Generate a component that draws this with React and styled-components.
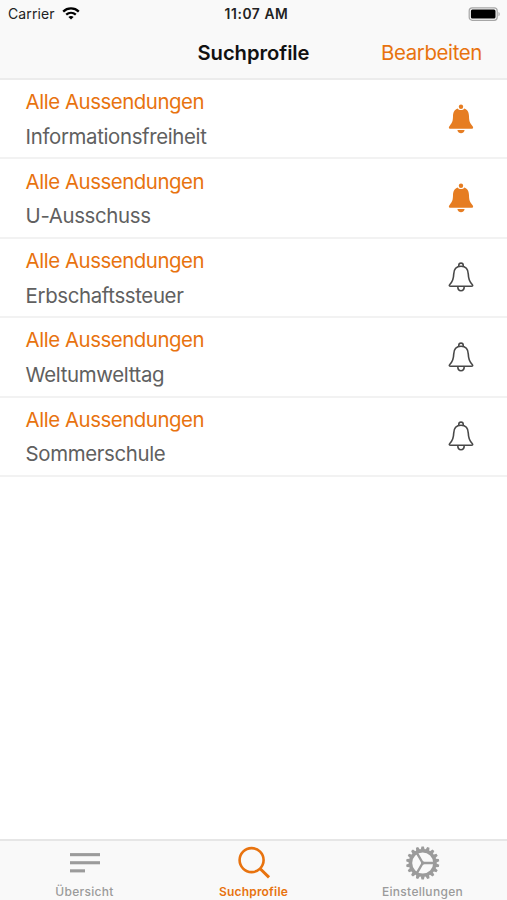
/*
 * SearchProfilesPage
 *
 * Lists the saved search profiles and whether notifications are on
 *
 */

import React from 'react';
import styled, { createGlobalStyle } from 'styled-components';

const ORANGE = '#e8730f';
const BELL_ORANGE = '#e67d22';
const GREY = '#9b9b9b';

const GlobalStyle = createGlobalStyle`
  body {
    margin: 0;
    background: #fff;
    font-family: Inter, 'Liberation Sans', sans-serif;
  }

  * {
    box-sizing: border-box;
  }

  svg {
    display: block;
  }
`;

const Screen = styled.div`
  display: flex;
  flex-direction: column;
  height: 900px;
  overflow: hidden;
`;

const Header = styled.header`
  height: 80px;
  background: #f9f9f9;
  border-bottom: 2px solid #ececec;
`;

const StatusBar = styled.div`
  display: grid;
  grid-template-columns: 1fr auto 1fr;
  align-items: center;
  height: 27px;
  padding: 0 6px 0 8px;
  font-size: 14px;
  color: #222;
`;

const Carrier = styled.div`
  display: flex;
  align-items: center;
  gap: 7px;
  letter-spacing: 0.1px;
`;

const Clock = styled.div`
  font-weight: 600;
  font-size: 13.8px;
  letter-spacing: 0.6px;
  padding-left: 4px;
`;

const BatterySlot = styled.div`
  justify-self: end;
`;

const NavBar = styled.div`
  display: grid;
  grid-template-columns: 1fr auto 1fr;
  align-items: center;
  height: 51px;
  padding: 0 25px;
`;

const Title = styled.h1`
  grid-column: 2;
  margin: 0;
  font-size: 20.2px;
  font-weight: 600;
  letter-spacing: -0.05px;
  color: #111;
`;

const EditButton = styled.button`
  justify-self: end;
  padding: 0;
  border: 0;
  background: none;
  font: inherit;
  font-size: 20.4px;
  letter-spacing: -0.35px;
  color: ${ORANGE};
`;

const List = styled.ul`
  flex: 1;
  margin: 0;
  padding: 0;
  list-style: none;
`;

const Row = styled.li`
  display: flex;
  align-items: center;
  justify-content: space-between;
  height: 79.4px;
  padding: 0 33px 0 25.6px;
  border-bottom: 2px solid #f2f2f2;
`;

const Profile = styled.div`
  padding-top: 2.2px;
`;

const Source = styled.div`
  font-size: 20.4px;
  line-height: 34.5px;
  letter-spacing: -0.45px;
  color: ${ORANGE};
`;

const Term = styled(Source)`
  letter-spacing: -0.35px;
  color: #606060;
`;

const TabBar = styled.nav`
  display: grid;
  grid-template-columns: repeat(3, 1fr);
  height: 61px;
  background: #f9f9f9;
  border-top: 2px solid #e6e6e6;
`;

const Tab = styled.a`
  display: flex;
  flex-direction: column;
  align-items: center;
  padding-top: 4px;
  color: ${props => (props.$active ? ORANGE : GREY)};
`;

const TabLabel = styled.span`
  margin-top: 3px;
  font-size: 12px;
  font-weight: ${props => (props.$bold ? 600 : 500)};
  line-height: 16px;
  letter-spacing: ${props => (props.$bold ? '0.2px' : '0.3px')};
`;

const WifiIcon = () => (
  <svg width="18" height="13" viewBox="0 0 18 13" fill="none" stroke="#000" strokeWidth="2.3">
    <path d="M1.2 4.6C5.5 0.4 12.5 0.4 16.8 4.6" />
    <path d="M4.2 7.7C7 5.2 11 5.2 13.8 7.7" />
    <path d="M6.4 9.9C7.9 8.6 10.1 8.6 11.6 9.9L9 12.6Z" fill="#000" stroke="none" />
  </svg>
);

const BatteryIcon = () => (
  <svg width="33" height="14" viewBox="0 0 33 14">
    <rect x="1.2" y="0.9" width="28" height="12.4" rx="3" fill="#f9f9f9" stroke="#a6a6a6" strokeWidth="1.2" />
    <rect x="2.9" y="2.6" width="24.6" height="9" rx="1.5" fill="#000" />
    <path d="M30.5 5c1.6.5 1.6 3.7 0 4.2Z" fill="#a6a6a6" />
  </svg>
);

const BellIcon = ({ on }) =>
  on ? (
    <svg width="26" height="30" viewBox="0 0 26 30" fill={BELL_ORANGE}>
      <circle cx="13" cy="2.7" r="2.2" />
      <path d="M9.8 4.4C10.6 6.4 15.4 6.4 16.2 4.4C19.9 5.6 20.9 8.6 21 12.3C21.1 17 21.8 19.2 24.4 21.9C25.8 23.4 25.2 24.8 23.2 24.8H2.8C.8 24.8.2 23.4 1.6 21.9C4.2 19.2 4.9 17 5 12.3C5.1 8.6 6.1 5.6 9.8 4.4Z" />
      <path d="M9.4 25.9H16.6C15.9 30.3 10.1 30.3 9.4 25.9Z" />
    </svg>
  ) : (
    <svg width="26" height="30" viewBox="0 0 26 30" fill="none" stroke="#484848" strokeWidth="1.6">
      <path d="M10.8 4.6V3.2C10.8.4 15.2.4 15.2 3.2V4.6" />
      <path d="M13 4.3C18.3 4.3 20.2 8 20.3 12.3C20.4 17 21 19.2 24 22.2C25.2 23.5 24.8 24.3 23.2 24.3H2.8C1.2 24.3.8 23.5 2 22.2C5 19.2 5.6 17 5.7 12.3C5.8 8 7.7 4.3 13 4.3Z" />
      <path d="M9.8 24.5C9.8 30.2 16.2 30.2 16.2 24.5" />
    </svg>
  );

const LinesIcon = () => (
  <svg width="34" height="36" viewBox="0 0 34 36" fill="currentColor">
    <rect x="2" y="8.1" width="30" height="3.1" />
    <rect x="2" y="16.2" width="30" height="3.1" />
    <rect x="2" y="24.3" width="15" height="3.1" />
  </svg>
);

const SearchIcon = () => (
  <svg width="34" height="36" viewBox="0 0 34 36" fill="none" stroke="currentColor">
    <circle cx="14.6" cy="15.1" r="12" strokeWidth="2.6" />
    <path d="M23.2 23.8L32 32.4" strokeWidth="3" />
  </svg>
);

const GearIcon = () => (
  <svg width="34" height="36" viewBox="0 0 34 36" fill="none" stroke="currentColor">
    <g transform="translate(16.7 18)">
      <circle r="12.2" strokeWidth="3.4" />
      {Array.from({ length: 18 }, (_, i) => (
        <path
          key={i}
          d="M-2 -13.2L-1.2 -16.6H1.2L2 -13.2Z"
          fill="currentColor"
          stroke="none"
          transform={`rotate(${i * 20})`}
        />
      ))}
      <path d="M0 0H12M0 0L-6 -10.4M0 0L-6 10.4" strokeWidth="2.4" />
      <circle r="1.8" fill="currentColor" stroke="none" />
    </g>
  </svg>
);

const profiles = [
  { term: 'Informationsfreiheit', on: true },
  { term: 'U-Ausschuss', on: true },
  { term: 'Erbschaftssteuer', on: false },
  { term: 'Weltumwelttag', on: false },
  { term: 'Sommerschule', on: false },
];

export default function App() {
  return (
    <Screen>
      <GlobalStyle />
      <Header>
        <StatusBar>
          <Carrier>
            Carrier
            <WifiIcon />
          </Carrier>
          <Clock>11:07 AM</Clock>
          <BatterySlot>
            <BatteryIcon />
          </BatterySlot>
        </StatusBar>
        <NavBar>
          <Title>Suchprofile</Title>
          <EditButton>Bearbeiten</EditButton>
        </NavBar>
      </Header>
      <List>
        {profiles.map(profile => (
          <Row key={profile.term}>
            <Profile>
              <Source>Alle Aussendungen</Source>
              <Term>{profile.term}</Term>
            </Profile>
            <BellIcon on={profile.on} />
          </Row>
        ))}
      </List>
      <TabBar>
        <Tab>
          <LinesIcon />
          <TabLabel>Übersicht</TabLabel>
        </Tab>
        <Tab $active>
          <SearchIcon />
          <TabLabel $bold>Suchprofile</TabLabel>
        </Tab>
        <Tab>
          <GearIcon />
          <TabLabel>Einstellungen</TabLabel>
        </Tab>
      </TabBar>
    </Screen>
  );
}
